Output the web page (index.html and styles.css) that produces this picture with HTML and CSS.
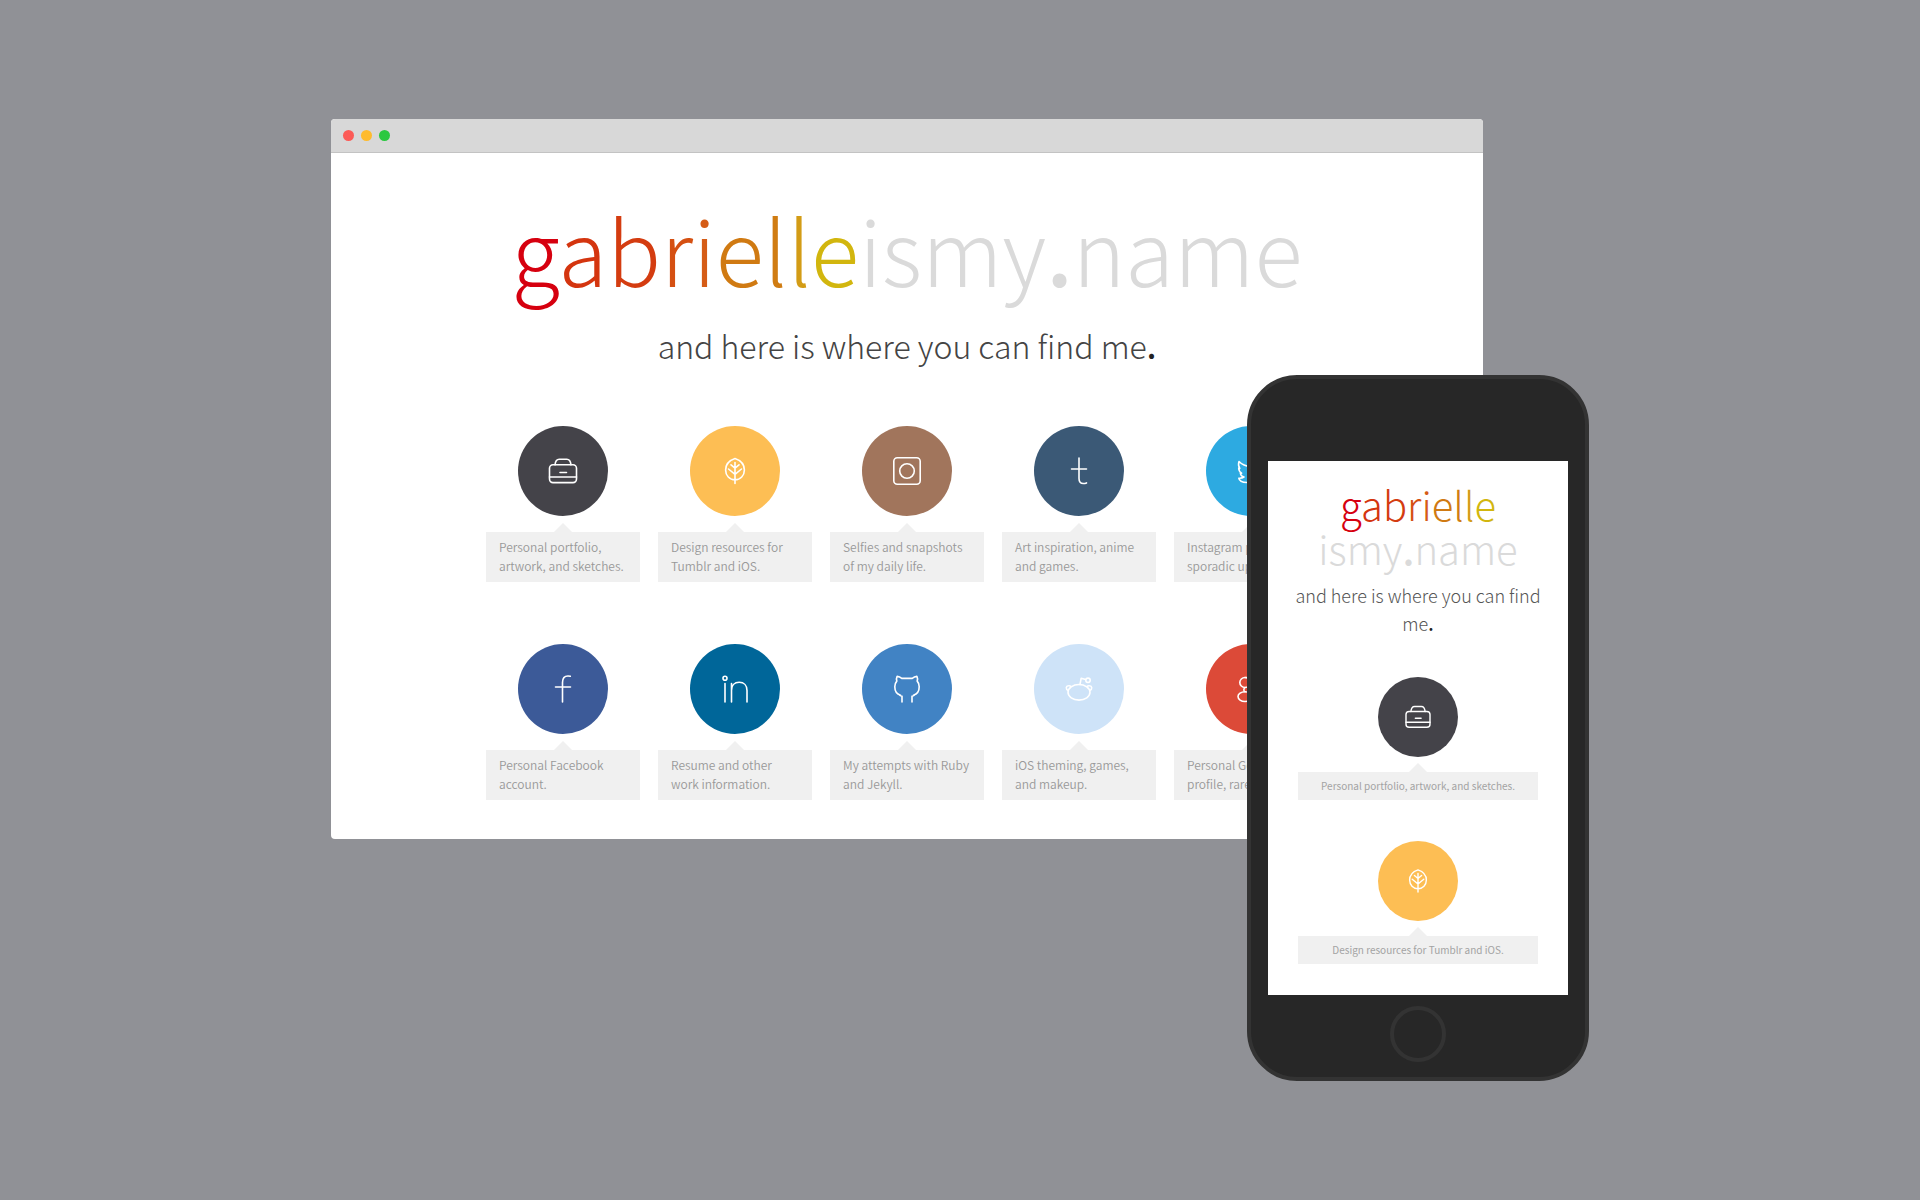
FILE: index.html
```html
<!DOCTYPE html>
<html lang="en">
<head>
<meta charset="utf-8">
<meta name="viewport" content="width=device-width, initial-scale=1">
<title>gabrielleismy.name</title>
<link rel="stylesheet" href="styles.css">
</head>
<body>
<svg class="sprite" aria-hidden="true">
  <symbol id="case" viewBox="0 0 90 90"><rect x="31.500" y="38.800" width="27" height="17.800" rx="3.500"/><path d="M37 38.800c.4-3.600 1.600-5.600 4.200-5.600h7.600c2.600 0 3.800 2 4.200 5.600M31.500 51h27M42 46.500h6.500"/></symbol>
  <symbol id="leaf" viewBox="0 0 90 90"><path d="M45 32.500c5 1.700 9.400 5.700 9.400 11.500 0 5.500-4 9.800-9.400 9.800s-9.400-4.300-9.400-9.800c0-5.800 4.400-9.800 9.400-11.500zM45 36.500v21M41 38.800l4 3.400 4-3.400M38.500 43l6.500 5.300 6.500-5.300"/></symbol>
  <symbol id="camera" viewBox="0 0 90 90"><rect x="31.800" y="31.800" width="26.400" height="26.400" rx="3.500"/><circle cx="45" cy="45" r="7.300"/></symbol>
  <symbol id="tumblr" viewBox="0 0 90 90"><path d="M45 32v20.500c0 3.500 1.500 5 4.300 5 1.200 0 2.200-.2 3.200-.6M37.500 43h15"/></symbol>
  <symbol id="twitter" viewBox="0 0 90 90"><path d="M33 35.500c3 3 6.500 4.700 11 5-.6-4 2-7.200 6-7.200 2 0 3.600.8 4.700 2.100l3.800-1.400-1.800 3.500 2.500-.4-2.600 2.900c.5 9.500-6.600 16.500-15.600 16.500-4.500 0-7.700-1.200-8.200-4.300 2 .2 3.700-.2 5.200-1.200-2.300-.5-3.300-1.800-3.600-3.600l1.200-.2c-1.900-1.200-2.900-2.900-2.900-5.100l1.100.3c-1.500-2.200-1.600-4.500-.8-6.900z"/></symbol>
  <symbol id="facebook" viewBox="0 0 90 90"><path d="M44.500 58V38.500c0-4.300 2.200-6.500 5.500-6.500.9 0 1.500.1 2.300.3M37.500 43h15"/></symbol>
  <symbol id="linkedin" viewBox="0 0 90 90"><circle cx="35" cy="34.300" r="2"/><path d="M35 39.500V58M41.500 39.500V58M41.500 46.500c0-5 3-8.200 7.700-8.200s7.800 3.200 7.800 8.200V58"/></symbol>
  <symbol id="github" viewBox="0 0 90 90"><path d="M37.800 51.200l2.200 1V58M52.200 51.200l-2.200 1V58M38.500 51.200c-3.600-1-5.700-3.900-5.700-8.400 0-2.400.7-4.300 2-5.700-.5-1.700-.4-3.300.3-4.700 1.700.2 3.200.8 4.700 2h10.400c1.500-1.200 3-1.800 4.700-2 .7 1.400.8 3 .3 4.700 1.300 1.400 2 3.300 2 5.700 0 4.500-2.100 7.400-5.700 8.400"/></symbol>
  <symbol id="reddit" viewBox="0 0 90 90"><ellipse cx="45" cy="48.300" rx="11" ry="7.800"/><path d="M34.200 46.500c-2.900-1.300-2.300-4.600.3-4.800 1-.1 1.800.1 2.500.6M55.800 46.500c2.900-1.300 2.300-4.600-.3-4.800-1-.1-1.800.1-2.500.6M46 40.400l1.200-6.200 4.300 1.400"/><circle cx="54" cy="36.300" r="2.200"/></symbol>
  <symbol id="google" viewBox="0 0 90 90"><ellipse cx="39" cy="38.500" rx="5.200" ry="5"/><path d="M39 33.500h6M39 43.500c-1.800 1.500-1.300 3.700 0 4.200"/><ellipse cx="39" cy="52.600" rx="7" ry="4.900"/><path d="M50 43h8.500M54.200 38.800v8.500"/></symbol>
</svg>

<main class="stage">
  <div class="showcase">
    <section class="window">
      <header class="titlebar">
        <span class="light light-close"></span>
        <span class="light light-minimize"></span>
        <span class="light light-expand"></span>
      </header>
      <div class="page">
        <h1 class="title"><span class="c1">g</span><span class="c2">a</span><span class="c3">b</span><span class="c4">r</span><span class="c5">i</span><span class="c6">e</span><span class="c7">l</span><span class="c8">l</span><span class="c9">e</span>ismy<b>.</b>name</h1>
        <p class="tagline">and here is where you can find me<b>.</b></p>
        <ul class="links">
          <li class="item"><a class="disc dark" href="#" aria-label="Portfolio"><svg><use href="#case"/></svg></a><p class="note">Personal portfolio, artwork, and sketches.</p></li>
          <li class="item"><a class="disc amber" href="#" aria-label="Design resources"><svg><use href="#leaf"/></svg></a><p class="note">Design resources for Tumblr and iOS.</p></li>
          <li class="item"><a class="disc brown" href="#" aria-label="Instagram"><svg><use href="#camera"/></svg></a><p class="note">Selfies and snapshots of my daily life.</p></li>
          <li class="item"><a class="disc navy" href="#" aria-label="Tumblr"><svg><use href="#tumblr"/></svg></a><p class="note">Art inspiration, anime and games.</p></li>
          <li class="item"><a class="disc sky" href="#" aria-label="Twitter"><svg><use href="#twitter"/></svg></a><p class="note">Instagram posts, sporadic updates.</p></li>
          <li class="item"><a class="disc indigo" href="#" aria-label="Facebook"><svg><use href="#facebook"/></svg></a><p class="note">Personal Facebook account.</p></li>
          <li class="item"><a class="disc ocean" href="#" aria-label="LinkedIn"><svg><use href="#linkedin"/></svg></a><p class="note">Resume and other work information.</p></li>
          <li class="item"><a class="disc blue" href="#" aria-label="GitHub"><svg><use href="#github"/></svg></a><p class="note">My attempts with Ruby and Jekyll.</p></li>
          <li class="item"><a class="disc pale" href="#" aria-label="Reddit"><svg><use href="#reddit"/></svg></a><p class="note">iOS theming, games, and makeup.</p></li>
          <li class="item"><a class="disc red" href="#" aria-label="Google+"><svg><use href="#google"/></svg></a><p class="note">Personal Google+ profile, rarely used.</p></li>
        </ul>
      </div>
    </section>

    <section class="phone">
      <div class="screen">
        <h2 class="title"><span class="c1">g</span><span class="c2">a</span><span class="c3">b</span><span class="c4">r</span><span class="c5">i</span><span class="c6">e</span><span class="c7">l</span><span class="c8">l</span><span class="c9">e</span><br>ismy<b>.</b>name</h2>
        <p class="tagline">and here is where you can find me<b>.</b></p>
        <ul class="links">
          <li class="item"><a class="disc dark" href="#" aria-label="Portfolio"><svg><use href="#case"/></svg></a><p class="note">Personal portfolio, artwork, and sketches.</p></li>
          <li class="item"><a class="disc amber" href="#" aria-label="Design resources"><svg><use href="#leaf"/></svg></a><p class="note">Design resources for Tumblr and iOS.</p></li>
        </ul>
      </div>
      <button class="home" type="button" aria-label="Home"></button>
    </section>
  </div>
</main>
</body>
</html>
```

FILE: styles.css
```css
* { box-sizing: border-box; }

body {
  margin: 0;
  background: #909196;
  font-family: "Noto Sans CJK SC", "Noto Sans", sans-serif;
}

h1, h2, p, ul { margin: 0; padding: 0; }
ul { list-style: none; }
.sprite { display: none; }

.stage {
  min-height: 100vh;
  padding: 32px;
  display: flex;
  align-items: center;
  justify-content: center;
}

.showcase {
  position: relative;
  width: 100%;
  max-width: 1258px;
  padding: 0 106px 242px 0;
}

/* Browser window */
.window {
  background: #fff;
  border-radius: 4px;
  overflow: hidden;
}

.titlebar {
  display: flex;
  align-items: center;
  gap: 7px;
  height: 34px;
  padding: 0 12px;
  background: #d8d8d8;
  border-bottom: 1px solid #c3c3c3;
}

.light { width: 11px; height: 11px; border-radius: 50%; }
.light-close { background: #fc5b57; }
.light-minimize { background: #febb2e; }
.light-expand { background: #2bc840; }

.page {
  display: flex;
  flex-direction: column;
  align-items: center;
  padding: 40px 24px 39px;
}

.title {
  color: #dadada;
  font-size: 89px;
  line-height: 112px;
  font-weight: 300;
  text-align: center;
}

.title b { font-weight: 500; }

.c1 { color: #d6000f; }
.c2 { color: #d4350f; }
.c3 { color: #d43c10; }
.c4 { color: #d55012; }
.c5 { color: #d55c16; }
.c6 { color: #d07a12; }
.c7 { color: #d07c12; }
.c8 { color: #d39c16; }
.c9 { color: #d2b60e; }

.tagline {
  margin-top: 16px;
  color: #444;
  font-size: 32px;
  line-height: 48px;
  font-weight: 300;
  text-align: center;
}

.tagline b { color: #222; font-weight: 500; }

.links {
  display: grid;
  grid-template-columns: repeat(5, 1fr);
  gap: 62px 18px;
  width: 100%;
  max-width: 842px;
  margin-top: 57px;
}

.item {
  display: flex;
  flex-direction: column;
  align-items: center;
  gap: 16px;
}

.disc {
  display: block;
  width: 90px;
  height: 90px;
  border-radius: 50%;
}

.disc svg {
  display: block;
  width: 100%;
  height: 100%;
  fill: none;
  stroke: #fff;
  stroke-width: 1.6;
  stroke-linecap: round;
  stroke-linejoin: round;
}

.dark { background: #444349; }
.amber { background: #fdbe54; }
.brown { background: #a1755c; }
.navy { background: #3b5976; }
.sky { background: #2daae1; }
.indigo { background: #3c5a98; }
.ocean { background: #006699; }
.blue { background: #4183c4; }
.pale { background: #cee3f8; }
.red { background: #dc4a38; }

.note {
  position: relative;
  width: 100%;
  padding: 5px 13px 7px;
  background: #f0f0f0;
  color: #999;
  font-size: 12px;
  line-height: 19px;
  font-weight: 350;
}

.note::before {
  content: "";
  position: absolute;
  left: 50%;
  bottom: 100%;
  margin-left: -9px;
  border: 9px solid transparent;
  border-top-width: 0;
  border-bottom-color: #f0f0f0;
}

/* Phone */
.phone {
  position: absolute;
  right: 0;
  bottom: 0;
  width: 342px;
  padding: 82px 17px 15px;
  display: flex;
  flex-direction: column;
  align-items: center;
  gap: 11px;
  background: #272727;
  border: 4px solid #333;
  border-radius: 50px;
}

.screen {
  width: 100%;
  padding: 21px 20px 31px;
  background: #fff;
}

.screen .title { font-size: 40px; line-height: 44px; }
.screen .tagline { margin-top: 11px; color: #555; font-size: 18px; line-height: 28px; }

.screen .links {
  grid-template-columns: 1fr;
  gap: 41px;
  padding: 0 10px;
  margin-top: 40px;
}

.screen .item { gap: 15px; }
.screen .disc { width: 80px; height: 80px; }

.screen .note {
  padding: 4px;
  color: #a3a3a3;
  font-size: 10px;
  line-height: 20px;
  font-weight: 400;
  text-align: center;
}

.home {
  width: 56px;
  height: 56px;
  padding: 0;
  background: transparent;
  border: 4px solid #333;
  border-radius: 50%;
}
```
